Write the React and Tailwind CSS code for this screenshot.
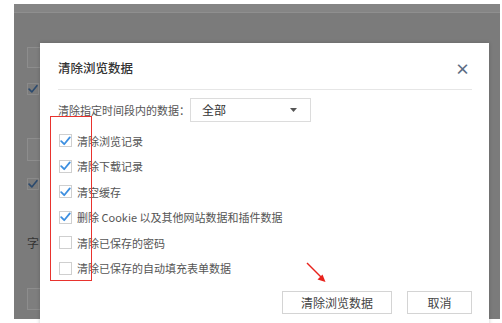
const options = [
  { label: '清除浏览记录', checked: true },
  { label: '清除下载记录', checked: true },
  { label: '清空缓存', checked: true },
  { label: '删除 Cookie 以及其他网站数据和插件数据', checked: true },
  { label: '清除已保存的密码', checked: false },
  { label: '清除已保存的自动填充表单数据', checked: false },
];

function CheckBox({ checked }) {
  return (
    <span className="w-[13px] h-[13px] border border-[#cfcfcf] bg-white flex items-center justify-center shrink-0">
      {checked && (
        <svg width="11" height="10" viewBox="0 0 11 10" fill="none">
          <path d="M1.2 5.2 L4.2 8.2 L9.8 1.4" stroke="#3d8fe0" strokeWidth="1.8" strokeLinecap="round" strokeLinejoin="round" />
        </svg>
      )}
    </span>
  );
}

function BackdropPage() {
  return (
    <div className="flex flex-col">
      <div className="h-[9px] bg-[#858585] border-b border-[#8f8f8f]" />
      <div className="flex flex-col pl-[13px]">
        <div className="mt-[34px] w-[40px] h-[21px] border border-[#8d8d8d] bg-[#7e7e7e]" />
        <div className="mt-[15px] w-[12px] h-[12px] border border-[#8a8a8a] flex items-center justify-center">
          <svg width="11" height="10" viewBox="0 0 11 10" fill="none">
            <path d="M1.2 5.2 L4.2 8.2 L9.8 1.4" stroke="#2b4a6e" strokeWidth="1.8" strokeLinecap="round" strokeLinejoin="round" />
          </svg>
        </div>
        <div className="mt-[43px] w-[40px] h-[23px] border border-[#8d8d8d] bg-[#7e7e7e]" />
        <div className="mt-[17px] w-[12px] h-[12px] border border-[#8a8a8a] flex items-center justify-center">
          <svg width="11" height="10" viewBox="0 0 11 10" fill="none">
            <path d="M1.2 5.2 L4.2 8.2 L9.8 1.4" stroke="#2b4a6e" strokeWidth="1.8" strokeLinecap="round" strokeLinejoin="round" />
          </svg>
        </div>
        <div className="mt-[45px] text-[12px] leading-[16px] text-[#333]">字</div>
        <div className="mt-[37px] w-[40px] h-[22px] border border-[#8d8d8d] bg-[#7e7e7e]" />
      </div>
    </div>
  );
}

export default function App() {
  return (
    <div
      className="w-[502px] h-[323px] bg-white overflow-hidden relative"
      style={{ fontFamily: '"Noto Sans CJK SC", "Noto Sans", sans-serif' }}
    >
      <div className="ml-[14px] mt-[4px] w-[486px] h-[315px] bg-[#7b7b7b] relative">
        <BackdropPage />

        <div className="absolute left-[26px] top-[39px] w-[449px] h-[290px] bg-white shadow-[0_0_4px_rgba(0,0,0,0.2)]">
          <div className="pl-[18px] pr-[17px]">
            <div className="h-[47px] pt-[4px] flex items-center justify-between border-b border-[#e6e6e6]">
              <span className="text-[12.5px] text-[#333] font-medium">清除浏览数据</span>
              <span className="text-[15px] leading-none text-[#5c6d83] font-bold mr-[2px]">×</span>
            </div>

            <div className="mt-[8px] flex items-center">
              <span className="w-[132px] text-[11px] text-[#555]">清除指定时间段内的数据：</span>
              <div className="w-[121px] h-[24px] border border-[#dcdcdc] flex items-center justify-between pl-[11px] pr-[13px]">
                <span className="text-[12px] text-[#333]">全部</span>
                <svg width="7" height="4" viewBox="0 0 7 4">
                  <path d="M0 0 H7 L3.5 4 Z" fill="#555" />
                </svg>
              </div>
            </div>

            <div className="mt-[6px] flex flex-col">
              {options.map((o) => (
                <div key={o.label} className="h-[25.5px] flex items-center pl-[1px]">
                  <CheckBox checked={o.checked} />
                  <span className="ml-[5px] text-[11px] text-[#555] whitespace-nowrap">{o.label}</span>
                </div>
              ))}
            </div>

            <div className="mt-[10px] flex justify-end gap-[15px] pr-[-1px]">
              <button className="w-[110px] h-[23px] border border-[#d4d4d4] bg-white text-[12px] text-[#444]">
                清除浏览数据
              </button>
              <button className="w-[65px] h-[23px] border border-[#d4d4d4] bg-white text-[12px] text-[#444]">
                取消
              </button>
            </div>
          </div>

          <div className="absolute left-[10px] top-[73px] w-[42px] h-[165px] border border-[#e8332e]" />

          <svg className="absolute left-[264px] top-[218px]" width="24" height="24" viewBox="0 0 24 24">
            <path d="M3 2 L19 18" stroke="#e8221c" strokeWidth="1.4" />
            <path d="M21.5 21 L13.5 18.5 L18.5 13.5 Z" fill="#e8221c" />
          </svg>
        </div>
      </div>
    </div>
  );
}
